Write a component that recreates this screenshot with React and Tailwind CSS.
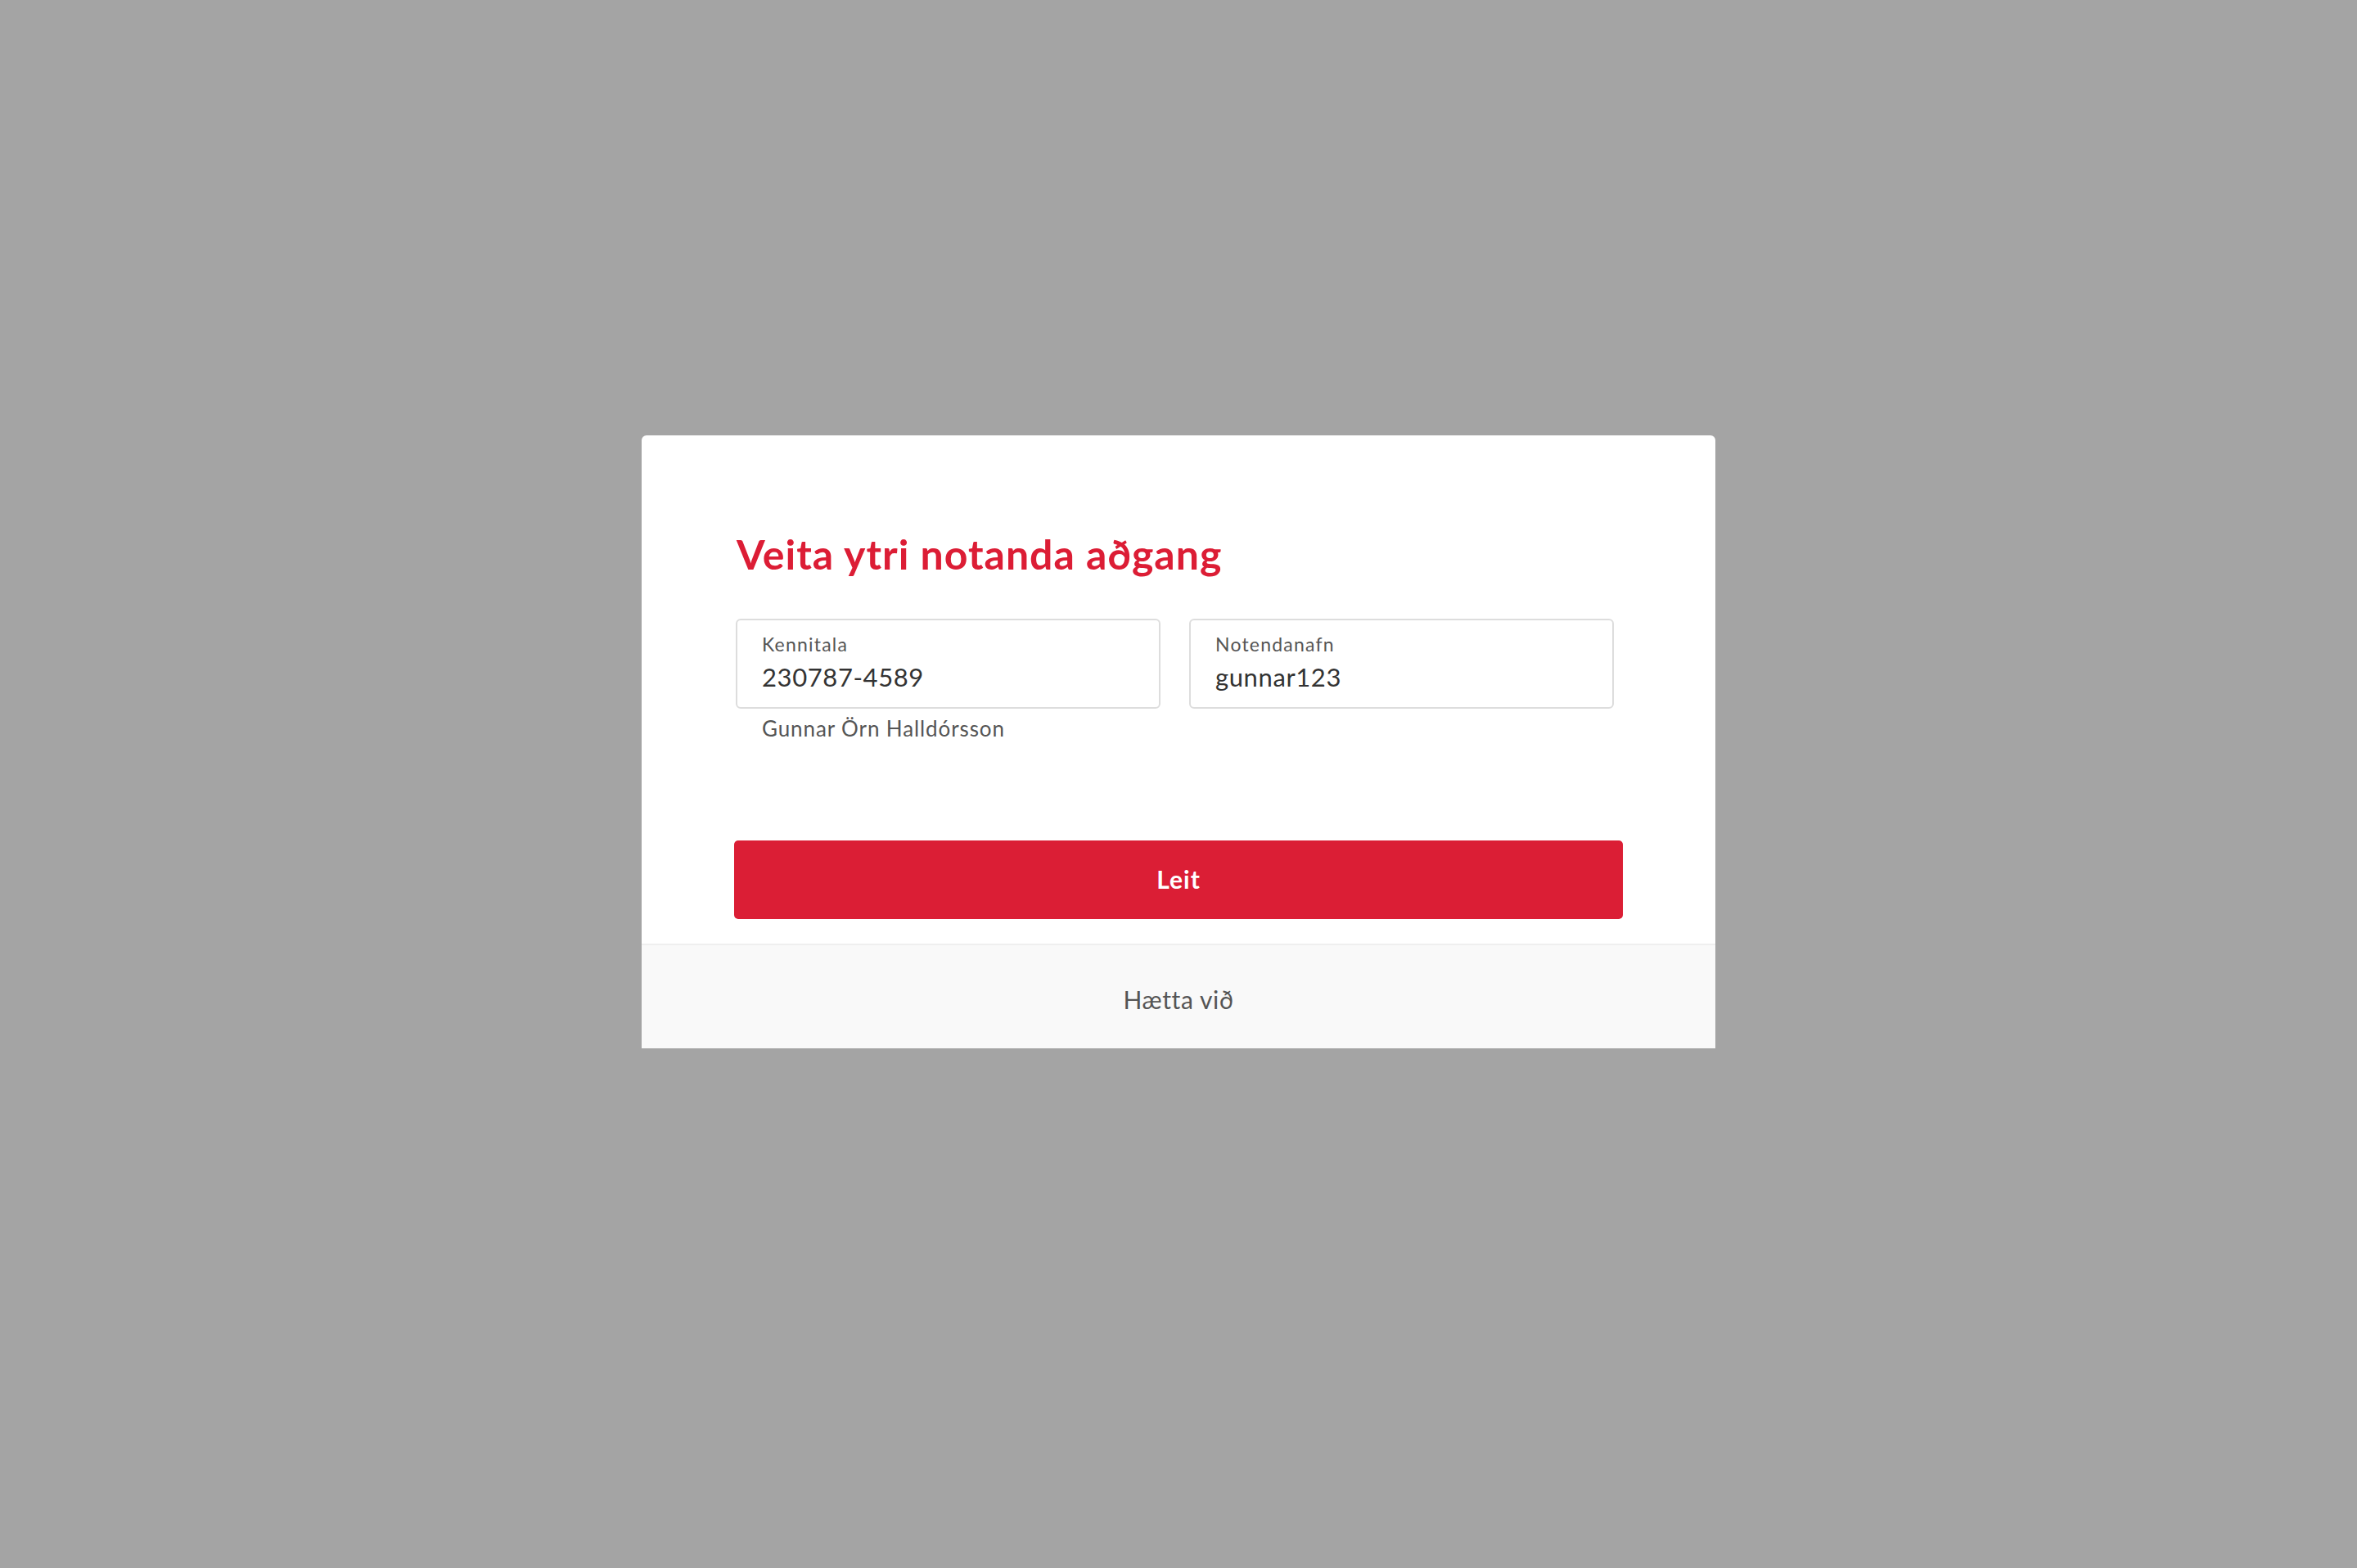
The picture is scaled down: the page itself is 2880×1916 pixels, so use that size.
import React from 'react';

function Field({ label, value, hint }) {
  return (
    <div className="flex flex-col">
      <div className="flex flex-col gap-[7px] rounded-[6px] border-2 border-[#dddddd] bg-white px-[30px] pt-[16px] pb-[18px]">
        <span className="text-[23px] leading-[1.2] font-normal tracking-[1.2px] text-[#555555]">{label}</span>
        <span className="text-[31px] leading-[1.2] font-normal tracking-[0.6px] text-[#333333]">{value}</span>
      </div>
      {hint && (
        <p className="mt-[9px] pl-[32px] text-[26px] leading-[1.2] font-normal tracking-[0.9px] text-[#555555]">{hint}</p>
      )}
    </div>
  );
}

export default function App() {
  return (
    <div
      className="min-h-screen w-full bg-[#a4a4a4] pt-[532px]"
      style={{ fontFamily: 'Lato, "Noto Sans", sans-serif' }}
    >
      <div className="mx-auto w-[1312px] overflow-hidden rounded-t-[6px] bg-white">
        {/* Body */}
        <div className="px-[113px] pt-[115px] pb-[30px]">
          <h1 className="pl-[3px] text-[50px] leading-[60px] font-bold tracking-[1px] text-[#dc1d35]">
            Veita ytri notanda aðgang
          </h1>

          <div className="mt-[49px] ml-[2px] grid w-[1073px] grid-cols-2 gap-[35px]">
            <Field label="Kennitala" value="230787-4589" hint="Gunnar Örn Halldórsson" />
            <Field label="Notendanafn" value="gunnar123" />
          </div>

          <button className="mt-[121px] flex h-[96px] w-full items-center justify-center rounded-[5px] bg-[#db1e35] text-[30px] font-bold tracking-[1px] text-white">
            Leit
          </button>
        </div>

        {/* Footer */}
        <div className="flex h-[128px] items-center justify-center border-t-2 border-[#efefef] bg-[#f9f9f9] pt-[8px]">
          <span className="text-[30px] font-normal tracking-[0.6px] text-[#555555]">Hætta við</span>
        </div>
      </div>
    </div>
  );
}
